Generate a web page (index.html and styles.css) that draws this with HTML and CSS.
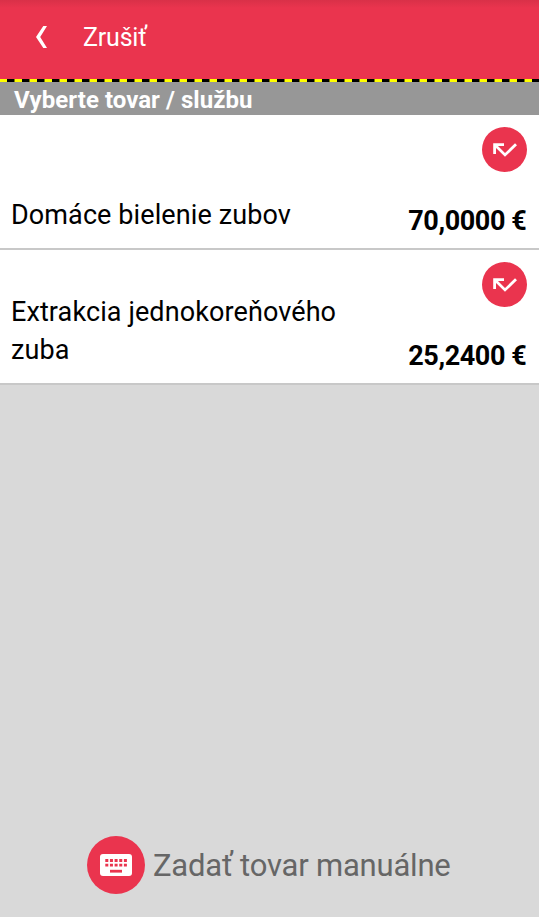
FILE: index.html
```
<!DOCTYPE html>
<html lang="sk">
<head>
<meta charset="utf-8">
<title>Vyberte tovar / službu</title>
<link rel="stylesheet" href="styles.css">
</head>
<body>
<header class="topbar">
  <svg class="back" viewBox="0 0 12 24"><path d="M8.300 1H12L5.200 12 12 23H8.300L1 12Z"/></svg>
  <span class="cancel">Zrušiť</span>
</header>
<div class="stripe"></div>
<h1 class="heading">Vyberte tovar / službu</h1>
<main class="list">
  <article class="item">
    <p class="name">Domáce bielenie zubov</p>
    <div class="side">
      <svg class="pick" viewBox="0 0 45 45"><circle cx="22.500" cy="22.500" r="22.500"/><path d="M12.600 27V17.600H22M13 18l10 9.900L34 17.300"/></svg>
      <span class="price">70,0000 €</span>
    </div>
  </article>
  <article class="item">
    <p class="name">Extrakcia jednokoreňového zuba</p>
    <div class="side">
      <svg class="pick" viewBox="0 0 45 45"><circle cx="22.500" cy="22.500" r="22.500"/><path d="M12.600 27V17.600H22M13 18l10 9.900L34 17.300"/></svg>
      <span class="price">25,2400 €</span>
    </div>
  </article>
</main>
<footer class="manual">
  <svg class="keyboard" viewBox="0 0 58 58"><circle cx="29" cy="29" r="29"/><rect class="keys" x="13" y="18" width="32" height="22" rx="3"/><path d="M18.300 24.500h21.600M18.300 29.200h21.600" stroke-dasharray="3 1.650"/><path d="M23 35.200h12"/></svg>
  <span class="label">Zadať tovar manuálne</span>
</footer>
</body>
</html>
```
FILE: styles.css
```
* { box-sizing: border-box; }
body { margin: 0; height: 917px; display: flex; flex-direction: column; background: #d9d9d9; font-family: Roboto, sans-serif; color: #000; overflow: hidden; }
.topbar { height: 79px; display: flex; align-items: flex-start; padding: 25px 0 0 35px; background: linear-gradient(#d93048, #ea344e 8px); color: #fff; }
.back { width: 12px; height: 24px; fill: #fff; }
.cancel { margin-left: 36px; font-size: 25px; line-height: 25px; letter-spacing: -0.2px; }
.stripe { height: 3px; background: repeating-linear-gradient(90deg, #ff0 0 6.500px, #000 7.500px 14px, #ff0 15px); }
.heading { margin: 0; height: 33px; padding-left: 14px; background: #979797; color: #fff; font-size: 24px; line-height: 36px; font-weight: 700; letter-spacing: 0.050px; }
.item { height: 135px; display: flex; justify-content: space-between; padding: 12px 12px 13px 11px; background: #fff; border-bottom: 2px solid #c8c8c8; }
.name { align-self: flex-end; width: 350px; margin: 0 0 1px; font-size: 27px; line-height: 38px; letter-spacing: 0.100px; }
.side { display: flex; flex-direction: column; align-items: flex-end; justify-content: space-between; }
.pick { width: 45px; height: 45px; fill: #ea344e; }
.pick path { fill: none; stroke: #fff; stroke-width: 2.800; }
.price { font-size: 27px; line-height: 28px; font-weight: 700; letter-spacing: -0.400px; margin-right: 0.600px; white-space: nowrap; }
.manual { margin-top: auto; height: 81px; display: flex; padding-left: 87px; }
.keyboard { width: 58px; height: 58px; fill: #ea344e; }
.keyboard .keys { fill: #fff; }
.keyboard path { fill: none; stroke: #ea344e; stroke-width: 2.800; }
.label { margin-left: 8px; color: #666; font-size: 31px; line-height: 60px; letter-spacing: -0.200px; }
```
